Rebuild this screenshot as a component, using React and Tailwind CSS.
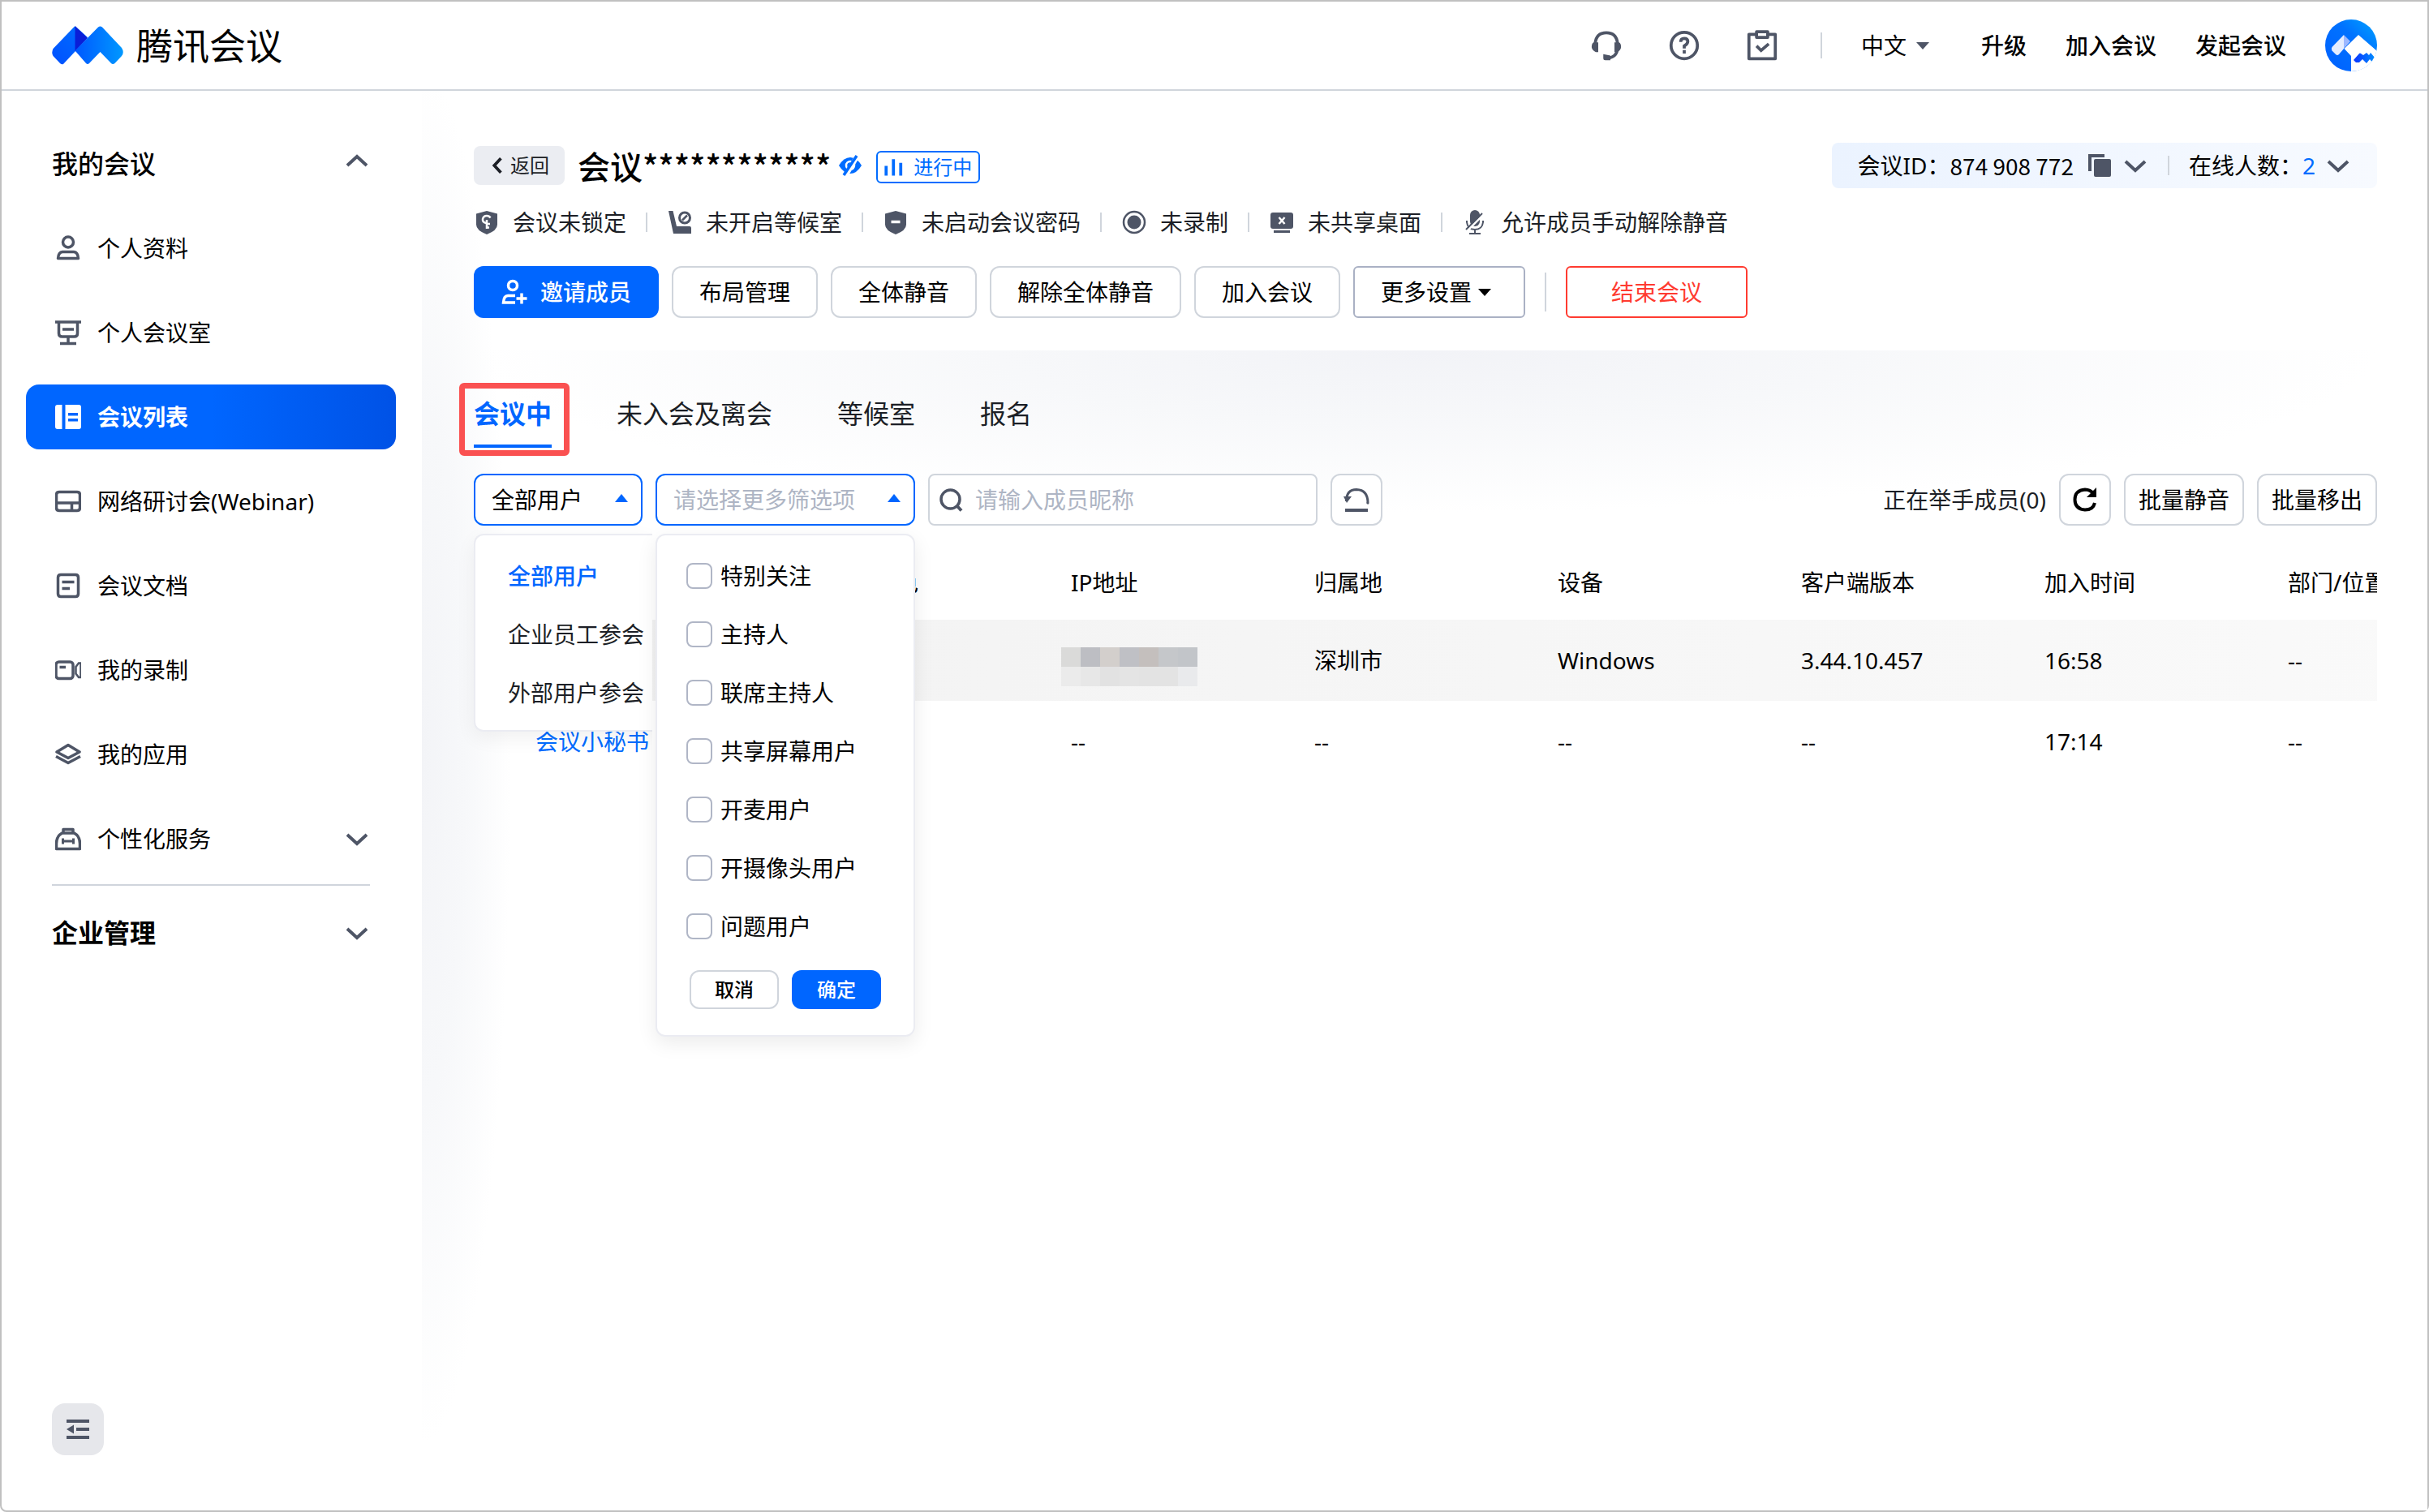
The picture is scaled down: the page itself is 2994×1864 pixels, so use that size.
const FONT = "font-['Noto_Sans','Noto_Sans_CJK_SC',sans-serif]";

/* ---------- icons ---------- */

function Icon({ children, className = 'size-8' }) {
    return (
        <svg className={`${className} shrink-0`} viewBox="0 0 32 32" fill="none" stroke="currentColor" strokeWidth="3.5" aria-hidden="true">
            {children}
        </svg>
    );
}

function Logo() {
    return (
        <svg className="w-22 h-12 shrink-0" viewBox="0 0 88 48" aria-hidden="true">
            <defs>
                <linearGradient id="logoLeft" x1="0" y1="1" x2="1" y2="0">
                    <stop offset="0" stopColor="#0050ff" />
                    <stop offset="1" stopColor="#0070ff" />
                </linearGradient>
                <linearGradient id="logoRight" x1="0" y1="0" x2="1" y2="0">
                    <stop offset="0" stopColor="#0058ff" />
                    <stop offset="1" stopColor="#0098ff" />
                </linearGradient>
            </defs>
            <path d="M29 0.500 L44 14 L29 31 L14 47 Q12 48 10 46 L1.500 37 Q-1 33 1.500 28 L27 1.500 Q28 0.300 29 0.500Z" fill="url(#logoLeft)" />
            <path d="M28.500 0 L44 15 L28.500 31Z" fill="#0a1ed8" />
            <path d="M28.500 30.500 L57 1.500 Q59.500 -0.500 62 1.500 L86 27 Q89.500 32.500 86 37 L77.500 46 Q75 48 73 46 L59.500 32 L46 46 Q44 48 42 46Z" fill="url(#logoRight)" />
        </svg>
    );
}

function Avatar() {
    return (
        <svg className="size-16" viewBox="0 0 64 64" aria-hidden="true">
            <defs>
                <linearGradient id="avatarBg" x1="0" y1="1" x2="1" y2="0">
                    <stop offset="0" stopColor="#0060ff" />
                    <stop offset="0.600" stopColor="#0072ff" />
                    <stop offset="1" stopColor="#00a4ff" />
                </linearGradient>
                <linearGradient id="avatarMark" x1="0" y1="0" x2="1" y2="0">
                    <stop offset="0" stopColor="#0a32ff" />
                    <stop offset="1" stopColor="#0090ff" />
                </linearGradient>
                <clipPath id="avatarClip">
                    <circle cx="32" cy="32" r="32" />
                </clipPath>
            </defs>
            <g clipPath="url(#avatarClip)">
                <rect width="64" height="64" fill="url(#avatarBg)" />
                <path d="M23 19 L31 27 L23 36Z" fill="#9cb8ff" />
                <path d="M8.500 34 L23 19 V36 L17 43 Q15 45 13 43 L8.500 38.500 Q7 36 8.500 34Z" fill="#e4edff" />
                <path d="M23.500 36 L41 19 L64 39 V64 H32 V45Z" fill="#fff" />
                <circle cx="49" cy="49" r="17" fill="#fff" />
                <path d="M35 50 L42 42 Q43 41 44 42 L47 44 L51 41 L54 44 L56 41 L62 48 Q62.500 50 61 52 L59 54 L55 49 L51 54 L46 49 L42 53 L38 53Z" fill="url(#avatarMark)" />
            </g>
        </svg>
    );
}

function Chevron({ up }) {
    return (
        <Icon className="size-8">
            <path d={up ? 'M4 18 L16 7 L28 18' : 'M4 11 L16 22 L28 11'} strokeWidth="4" />
        </Icon>
    );
}

function Triangle({ up, className = 'size-4' }) {
    return (
        <svg className={className} viewBox="0 0 16 16" fill="currentColor" aria-hidden="true">
            <path d={up ? 'M8 1 L16 11 H0Z' : 'M0 4 H16 L8 13Z'} />
        </svg>
    );
}

const menuIcons = {
    user: (
        <>
            <circle cx="16" cy="8.500" r="6.500" />
            <path d="M9 20.500 H23 Q28 21 28.500 28.500 H3.500 Q4 21 9 20.500Z" strokeLinejoin="round" />
        </>
    ),
    room: (
        <path d="M0 3 H32 M4.500 3 V17 Q4.500 21 8.500 21 H23.500 Q27.500 21 27.500 17 V3 M9 12 H23 M16 21 V29 M6 29.500 H26" />
    ),
    list: (
        <g fill="currentColor" stroke="none">
            <path d="M3 1 H8.500 V31 H3 Q0 31 0 28 V4 Q0 1 3 1Z" />
            <path fillRule="evenodd" d="M12.500 1 H29 Q32 1 32 4 V28 Q32 31 29 31 H12.500Z M16 11 V14.500 H28 V11Z M16 18 V21.500 H28 V18Z" />
        </g>
    ),
    webinar: (
        <path d="M5 4.500 H27 Q30.500 4.500 30.500 8 V24 Q30.500 27.500 27 27.500 H5 Q1.500 27.500 1.500 24 V8 Q1.500 4.500 5 4.500Z M1.500 18 H30.500 M20.500 18 V27.500" />
    ),
    doc: (
        <path d="M7 2.500 H25 Q28.500 2.500 28.500 6 V26 Q28.500 29.500 25 29.500 H7 Q3.500 29.500 3.500 26 V6 Q3.500 2.500 7 2.500Z M8.500 11.500 H23.500 M8.500 19.500 H18" />
    ),
    video: (
        <>
            <rect x="1" y="6" width="21" height="20.500" rx="3.500" />
            <path d="M5.500 12.500 H13" />
            <path d="M25.500 12 L29 7.500 H31.500 V25 H29 L25.500 20.500Z" strokeWidth="2.500" />
        </>
    ),
    apps: (
        <path d="M16 4.500 L30 13 L16 20.500 L2 13Z M1 18.500 L16 26.500 L31 18.500" strokeLinejoin="round" />
    ),
    service: (
        <>
            <path d="M8.500 9 H23.500 Q30.500 13 30.500 22 V28.500 H1.500 V22 Q1.500 13 8.500 9Z M10 9 V4.500 H22 V9" strokeLinejoin="round" />
            <path d="M8 19 H24 M9.500 15.500 V22.500 M22.500 15.500 V22.500" strokeWidth="3" />
        </>
    ),
};

const SHIELD = 'M16 2 L29 5.500 V19 Q29 26 16 31 Q3 26 3 19 V5.500Z';

const statusIcons = {
    lock: (
        <>
            <path d={SHIELD} fill="currentColor" stroke="none" />
            <path d="M15 17 Q10.500 16 11 12 Q12 8 16 8 Q19 8 20.500 10.500 M16 13 V24 M16 18 H20 M16 22.500 H19" stroke="#fff" strokeWidth="2.500" />
        </>
    ),
    seat: (
        <>
            <path d="M2 2 H7.500 L12 21 H28 Q30 21 30 23 V30 H8Z" fill="currentColor" stroke="none" />
            <circle cx="22" cy="10.500" r="6.500" strokeWidth="3" />
            <path d="M19 13.500 L25 7.500" strokeWidth="2.500" />
        </>
    ),
    password: (
        <>
            <path d={SHIELD} fill="currentColor" stroke="none" />
            <path d="M10.500 15.500 H21.500" stroke="#fff" />
        </>
    ),
    record: (
        <>
            <circle cx="16" cy="16" r="13" strokeWidth="2.500" />
            <circle cx="16" cy="16" r="8.500" fill="currentColor" stroke="none" />
        </>
    ),
    share: (
        <>
            <rect x="2" y="4" width="28" height="20" rx="3" fill="currentColor" stroke="none" />
            <path d="M12.500 10 L19.500 18 M19.500 10 L12.500 18" stroke="#fff" strokeWidth="2.500" />
            <path d="M6 27.500 H26" strokeWidth="3" />
        </>
    ),
    mic: (
        <>
            <rect x="10" y="1" width="12" height="20" rx="6" fill="currentColor" stroke="none" />
            <path d="M6 14 V16 Q7 25 16 25 Q25 25 26 16 V14 M16 25 V30 M9 30 H23" strokeWidth="2" />
            <path d="M7 26 L27 6" stroke="#fff" strokeWidth="2.500" />
            <path d="M5 25 L25 5" strokeWidth="2" />
        </>
    ),
};

/* ---------- data ---------- */

const menu = [
    { icon: 'user', label: '个人资料' },
    { icon: 'room', label: '个人会议室' },
    { icon: 'list', label: '会议列表', active: true },
    { icon: 'webinar', label: '网络研讨会(Webinar)' },
    { icon: 'doc', label: '会议文档' },
    { icon: 'video', label: '我的录制' },
    { icon: 'apps', label: '我的应用' },
    { icon: 'service', label: '个性化服务', expandable: true },
];

const statuses = [
    { icon: 'lock', label: '会议未锁定' },
    { icon: 'seat', label: '未开启等候室' },
    { icon: 'password', label: '未启动会议密码' },
    { icon: 'record', label: '未录制' },
    { icon: 'share', label: '未共享桌面' },
    { icon: 'mic', label: '允许成员手动解除静音' },
];

const filters = ['特别关注', '主持人', '联席主持人', '共享屏幕用户', '开麦用户', '开摄像头用户', '问题用户'];
const userTypes = ['全部用户', '企业员工参会', '外部用户参会'];
const tabs = ['会议中', '未入会及离会', '等候室', '报名'];
const columns = ['', '会议角色', 'IP地址', '归属地', '设备', '客户端版本', '加入时间', '部门/位置'];

const rows = [
    { name: '', role: '', ip: 'masked', area: '深圳市', device: 'Windows', version: '3.44.10.457', time: '16:58', dept: '--' },
    { name: '会议小秘书', role: '', ip: '--', area: '--', device: '--', version: '--', time: '17:14', dept: '--' },
];

/* ---------- parts ---------- */

function Header() {
    return (
        <header className="h-[110px] border-b-2 border-[#d0d5dc] px-[62px] flex items-center justify-between">
            <a href="#home" className="flex items-center gap-4 text-[45px] leading-none">
                <Logo />
                腾讯会议
            </a>
            <div className="flex items-center gap-12">
                <div className="flex items-center gap-14 mr-1 text-[#4e5566]">
                    <button type="button" aria-label="客服">
                        <Icon className="size-10">
                            <path d="M5 18 V14 Q6 3.500 16 3.500 Q26 3.500 27 14 V19 Q26.500 27 18 28.500" strokeWidth="3" />
                            <path d="M3.500 13 H8 V22.500 H5.500 Q1.500 20 1.500 17.500 Q1.500 14 3.500 13Z M28.500 13 H24 V22.500 H27 Q30.500 20 30.500 17.500 Q30.500 14 28.500 13Z" fill="currentColor" stroke="none" />
                            <path d="M13 24.500 L20 26 V30.500 H15 Q13 30.500 13 28.500Z" fill="currentColor" stroke="none" />
                        </Icon>
                    </button>
                    <button type="button" aria-label="帮助">
                        <Icon className="size-10">
                            <circle cx="16" cy="16" r="13" strokeWidth="3" />
                            <path d="M12.500 12.500 Q12.500 9 16 9 Q19.500 9 19.500 12 Q19.500 14.500 16 16.500 V19 M16 20.500 V24" strokeWidth="3" />
                        </Icon>
                    </button>
                    <button type="button" aria-label="待办">
                        <Icon className="size-10">
                            <path d="M9 5 H3 V29 H29 V5 H23 M10.500 2.500 H21.500 V8 H10.500Z" strokeWidth="3" strokeLinejoin="round" />
                            <path d="M10.500 16.500 L15 21 L22.500 14.500" strokeWidth="3" />
                        </Icon>
                    </button>
                </div>
                <div className="w-0.5 h-8 bg-[#d0d5dc]" />
                <button type="button" className="flex items-center gap-3 mr-4">
                    中文
                    <Triangle className="size-4 text-[#4e5566]" />
                </button>
                <a href="#upgrade" className="font-medium">升级</a>
                <a href="#join" className="font-medium">加入会议</a>
                <a href="#start" className="font-medium">发起会议</a>
                <button type="button" aria-label="账号">
                    <Avatar />
                </button>
            </div>
        </header>
    );
}

function Sidebar() {
    return (
        <aside className="w-[518px] shrink-0 pt-[50px] pb-17 flex flex-col">
            <button type="button" className="h-20 pl-[62px] pr-16 flex items-center justify-between text-[32px] font-medium">
                我的会议
                <span className="text-[#4e5566]"><Chevron up /></span>
            </button>
            <nav className="mt-6 pl-[30px] pr-8 flex flex-col gap-6">
                {menu.map((item) => (
                    <a
                        key={item.label}
                        href="#menu"
                        className={
                            item.active
                                ? 'h-20 px-9 rounded-2xl flex items-center text-white font-bold bg-linear-to-r from-[#0066ff] from-50% to-[#0052e6]'
                                : 'h-20 px-9 flex items-center'
                        }
                    >
                        <span className={item.active ? 'text-white' : 'text-[#4e5566]'}>
                            <Icon>{menuIcons[item.icon]}</Icon>
                        </span>
                        <span className="ml-5">{item.label}</span>
                        {item.expandable && <span className="ml-auto -mr-1 text-[#4e5566]"><Chevron /></span>}
                    </a>
                ))}
            </nav>
            <div className="mt-4 ml-[62px] mr-16 h-0.5 bg-[#d0d5dc]" />
            <button type="button" className="mt-[18px] h-20 pl-[62px] pr-16 flex items-center justify-between text-[32px] font-bold">
                企业管理
                <span className="text-[#4e5566]"><Chevron /></span>
            </button>
            <button type="button" aria-label="收起菜单" className="mt-auto ml-[62px] size-16 rounded-2xl bg-[#e6e7eb] text-[#4e5566] flex items-center justify-center">
                <Icon>
                    <path d="M2 6 H30 M14 16 H30 M2 26 H30" strokeWidth="4" />
                    <path d="M2 16 L11 10.500 V21.500Z" fill="currentColor" stroke="none" />
                </Icon>
            </button>
        </aside>
    );
}

function MeetingInfo() {
    return (
        <section>
            <div className="h-14 flex items-center">
                <button type="button" className="h-12 w-28 rounded-lg bg-[#ebedf2] flex items-center justify-center gap-1.5 text-2xl text-[#1c1f26]">
                    <Icon className="size-5">
                        <path d="M23 2 L10 16 L23 30" strokeWidth="6" />
                    </Icon>
                    返回
                </button>
                <h1 className="ml-4 text-[40px] leading-none font-medium font-['Noto_Sans_CJK_SC',sans-serif]">会议************</h1>
                <button type="button" aria-label="显示名称" className="ml-2 text-[#006cff]">
                    <Icon>
                        <path d="M2 16 Q8 6 16 6 Q24 6 30 16 Q24 26 16 26 Q8 26 2 16Z" fill="currentColor" stroke="none" />
                        <circle cx="16" cy="16" r="5" stroke="#fff" strokeWidth="2.500" />
                        <path d="M10 29 L25 4" stroke="#fff" strokeWidth="6" />
                        <path d="M8 28 L24 4" />
                    </Icon>
                </button>
                <span className="mt-1 ml-4 h-10 w-32 rounded-md border-2 border-[#006cff] text-[#006cff] text-2xl flex items-center justify-center gap-3">
                    <Icon className="size-6">
                        <path d="M3 30 V14 M15 30 V3 M27 30 V9" strokeWidth="5" />
                    </Icon>
                    进行中
                </span>
                <div className="ml-auto h-14 px-8 rounded-lg bg-linear-to-r from-[#ebf3ff] to-[#f7faff] flex items-center">
                    <span>会议ID：</span>
                    <span className="font-['Noto_Sans_CJK_SC',sans-serif]">874 908 772</span>
                    <button type="button" aria-label="复制" className="ml-4 text-[#4e5566]">
                        <Icon>
                            <path d="M11 8 H28 Q30 8 30 10 V28 Q30 30 28 30 H11 Q9 30 9 28 V10 Q9 8 11 8Z" fill="currentColor" stroke="none" />
                            <path d="M4 23 V4 H22" strokeWidth="4" />
                        </Icon>
                    </button>
                    <button type="button" aria-label="会议详情" className="ml-3 text-[#4e5566]"><Chevron /></button>
                    <div className="mx-6 w-0.5 h-6 bg-[#d0d5dc]" />
                    <span>在线人数：</span>
                    <span className="text-[#006cff]">2</span>
                    <button type="button" aria-label="在线成员" className="ml-3 text-[#4e5566]"><Chevron /></button>
                </div>
            </div>

            <ul className="mt-5 h-11 flex items-center">
                {statuses.map((s, i) => (
                    <li key={s.label} className="flex items-center">
                        {i > 0 && <span className="mx-6 w-0.5 h-6 bg-[#d0d5dc]" />}
                        <span className="text-[#4e5566]">
                            <Icon>{statusIcons[s.icon]}</Icon>
                        </span>
                        <span className="ml-4 text-[#1c1f26]">{s.label}</span>
                    </li>
                ))}
            </ul>

            <div className="mt-8 flex items-center gap-4">
                <button type="button" className="h-16 w-57 rounded-xl bg-[#0066ff] text-white font-medium flex items-center justify-center gap-4">
                    <Icon>
                        <circle cx="14" cy="8" r="5.500" />
                        <path d="M17 20.500 H8 Q3 20.500 2.500 29 H17 M25 17.500 V30.500 M18.500 24 H31.500" />
                    </Icon>
                    邀请成员
                </button>
                {['布局管理', '全体静音', '解除全体静音', '加入会议'].map((label) => (
                    <button key={label} type="button" className="h-16 px-8 rounded-xl border-2 border-[#d0d5dc] bg-white">
                        {label}
                    </button>
                ))}
                <button type="button" className="h-16 w-53 pl-8 rounded-md border-2 border-[#aab1c4] bg-white flex items-center gap-2">
                    更多设置
                    <Triangle className="size-4" />
                </button>
                <div className="mx-2 w-0.5 h-12 bg-[#d0d5dc]" />
                <button type="button" className="h-16 w-56 rounded-md border-2 border-[#ff3b30] text-[#ff3b30] bg-white">结束会议</button>
            </div>
        </section>
    );
}

function UserTypeSelect() {
    return (
        <div className="relative w-52">
            <select aria-label="用户类型" className="h-16 w-full appearance-none rounded-xl border-2 border-[#0066ff] bg-white pl-5 pr-12">
                {userTypes.map((t) => (
                    <option key={t}>{t}</option>
                ))}
            </select>
            <Triangle up className="absolute right-[18px] top-6 size-4 text-[#0066ff]" />
            <ul className="absolute left-0 top-[74px] z-10 w-55 pt-3.5 pb-2.5 pl-10 rounded-l-xl border-2 border-r-0 border-[#ebecf2] bg-white whitespace-nowrap text-[#1c1f26] shadow-[0_8px_24px_rgba(0,0,0,0.06)] [clip-path:inset(-24px_0px_-32px_-24px)]">
                {userTypes.map((t, i) => (
                    <li key={t} className={i === 0 ? 'h-18 flex items-center font-medium text-[#0066ff]' : 'h-18 flex items-center'}>
                        {t}
                    </li>
                ))}
            </ul>
        </div>
    );
}

function FilterSelect() {
    return (
        <div className="relative w-80">
            <select aria-label="更多筛选项" className="h-16 w-full appearance-none rounded-xl border-2 border-[#0066ff] bg-white pl-5 pr-12 text-[#aeb5c4]">
                <option>请选择更多筛选项</option>
            </select>
            <Triangle up className="absolute right-[18px] top-6 size-4 text-[#0066ff]" />
            <form className="absolute left-0 top-[74px] z-20 w-full py-3.5 px-9 rounded-xl border-2 border-[#ebecf2] bg-white shadow-[0_8px_24px_rgba(0,0,0,0.08)]">
                {filters.map((f) => (
                    <label key={f} className="h-18 flex items-center gap-2.5 whitespace-nowrap">
                        <input type="checkbox" className="size-8 shrink-0 appearance-none rounded-lg border-2 border-[#b0b6c6] bg-white" />
                        {f}
                    </label>
                ))}
                <div className="mt-[18px] mb-4.5 ml-1 flex gap-4 text-2xl font-medium">
                    <button type="button" className="h-12 w-[110px] shrink-0 rounded-xl border-2 border-[#d0d5dc]">取消</button>
                    <button type="button" className="h-12 w-[110px] shrink-0 rounded-xl bg-[#0066ff] text-white">确定</button>
                </div>
            </form>
        </div>
    );
}

function Toolbar() {
    return (
        <div className="mt-8 flex items-center gap-4">
            <UserTypeSelect />
            <FilterSelect />
            <label className="h-16 w-120 rounded-lg border-2 border-[#d0d5dc] bg-white flex items-center gap-3 px-3">
                <span className="text-[#4e5566]">
                    <Icon>
                        <circle cx="13.500" cy="15.500" r="11.500" />
                        <path d="M21 23 L27 29.500" strokeWidth="4" />
                    </Icon>
                </span>
                <input type="text" aria-label="成员昵称" placeholder="请输入成员昵称" className="w-full outline-none placeholder:text-[#aeb5c4]" />
            </label>
            <button type="button" aria-label="重置" className="size-16 rounded-xl border-2 border-[#d0d5dc] bg-white text-[#4e5566] flex items-center justify-center">
                <Icon>
                    <path d="M3.500 18 Q3.500 3.500 16 3.500 Q30 4 30 20 L29 21" strokeWidth="3" />
                    <path d="M0 12 H10 L4 20Z" fill="currentColor" stroke="none" />
                    <path d="M2 29 H30" strokeWidth="4" />
                </Icon>
            </button>
            <span className="ml-auto text-[#1c1f26]">正在举手成员(0)</span>
            <button type="button" aria-label="刷新" className="size-16 rounded-xl border-2 border-[#d0d5dc] bg-white flex items-center justify-center">
                <Icon>
                    <path d="M27 9 Q22.500 3.500 16 3.500 Q3.500 4.500 3.500 16 Q3.500 27.500 16 28.500 Q26 28.500 28 20" strokeWidth="4" />
                    <path d="M30 1 V13 H18Z" fill="currentColor" stroke="none" />
                </Icon>
            </button>
            <button type="button" className="h-16 px-4 rounded-xl border-2 border-[#d0d5dc] bg-white">批量静音</button>
            <button type="button" className="h-16 px-4 rounded-xl border-2 border-[#d0d5dc] bg-white">批量移出</button>
        </div>
    );
}

// pixelated IP address
function Mosaic() {
    return (
        <svg className="-ml-3 mt-4 w-42 h-12" viewBox="0 0 168 48" shapeRendering="crispEdges" role="img" aria-label="IP">
            {['#dadad9', '#bdbec3', '#d3cfcc', '#bfc0c5', '#c4bfbd', '#c5c7ca', '#c2c5c9'].map((c, i) => (
                <rect key={i} x={i * 24} y="0" width="24" height="24" fill={c} />
            ))}
            {['#ebebeb', '#e7e7e7', '#e2e2e2', '#e4e4e4', '#e3e3e3', '#e3e3e3', '#e9eaec'].map((c, i) => (
                <rect key={i} x={i * 24} y="24" width="24" height="24" fill={c} />
            ))}
        </svg>
    );
}

function MemberTable() {
    return (
        <div className="mt-6 overflow-hidden">
            <table className="w-[2536px] table-fixed text-left whitespace-nowrap">
                <thead>
                    <tr className="h-23">
                        {columns.map((c, i) => (
                            <th key={i} className={i === 0 ? 'w-[436px] font-normal' : 'font-normal'}>{c}</th>
                        ))}
                    </tr>
                </thead>
                <tbody>
                    {rows.map((r, i) => (
                        <tr key={i} className={i === 0 ? 'h-25 bg-linear-to-r from-[#f2f2f2] to-[#fafafa]' : 'h-25'}>
                            <td className="pl-19 text-[#006cff]">{r.name}</td>
                            <td>{r.role}</td>
                            <td>{r.ip === 'masked' ? <Mosaic /> : r.ip}</td>
                            <td>{r.area}</td>
                            <td>{r.device}</td>
                            <td>{r.version}</td>
                            <td>{r.time}</td>
                            <td>{r.dept}</td>
                        </tr>
                    ))}
                </tbody>
            </table>
        </div>
    );
}

export default function App() {
    return (
        <div className={`${FONT} min-h-screen flex flex-col border-2 border-[#c0c0c0] rounded-b-lg bg-white text-[28px] leading-10 text-black`}>
            <Header />
            <div className="flex-1 flex">
                <Sidebar />
                <main className="flex-1 min-w-0 pt-16 pl-16 pr-[62px] bg-[radial-gradient(ellipse_110px_850px_at_0px_820px,#f3f4f7,#f7f8fa_50%,white)]">
                    <MeetingInfo />
                    <section className="mt-10 pt-12 bg-[radial-gradient(ellipse_50%_200px_at_50%_0px,#f2f3f7,#f7f8fa_45%,transparent)] bg-no-repeat">
                        <div role="tablist" className="flex gap-20 text-[32px]">
                            {tabs.map((tab, i) => (
                                <button
                                    key={tab}
                                    type="button"
                                    role="tab"
                                    aria-selected={i === 0}
                                    className={i === 0 ? 'relative h-18 flex flex-col font-bold text-[#0066ff]' : 'h-18 flex flex-col text-[#1c1f26]'}
                                >
                                    <span className="leading-[60px]">{tab}</span>
                                    {i === 0 && <span className="mt-auto h-1 w-full bg-[#0066ff]" />}
                                    {i === 0 && <span className="absolute -top-2 -bottom-2.5 -left-4.5 -right-5.5 rounded-md border-[7px] border-[#fa5151]" />}
                                </button>
                            ))}
                        </div>
                        <Toolbar />
                        <MemberTable />
                    </section>
                </main>
            </div>
        </div>
    );
}
